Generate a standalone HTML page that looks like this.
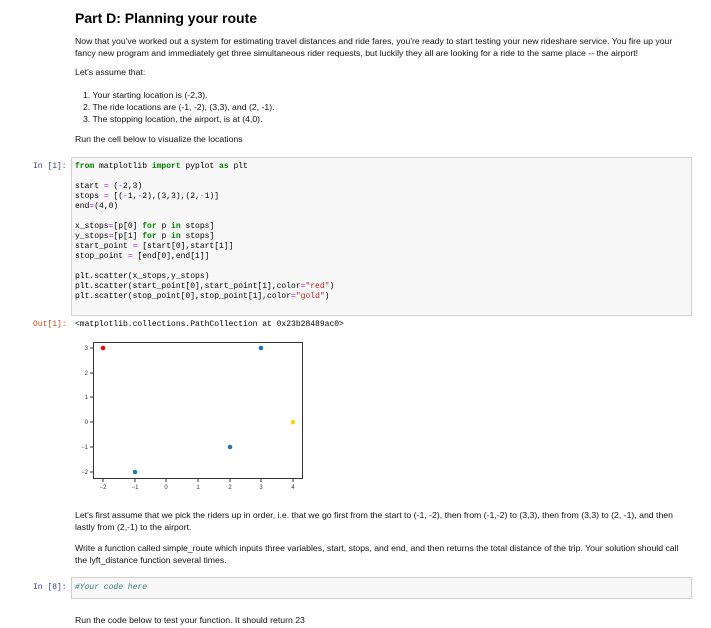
<!DOCTYPE html>
<html><head><meta charset="utf-8"><style>
body{margin:0;width:711px;height:628px;background:#fff;position:relative;overflow:hidden;font-family:"Liberation Sans",sans-serif;color:#000}
.a{position:absolute;white-space:nowrap}
.t{font-size:8.7px;line-height:10px;color:#111}
.m{font-family:"Liberation Mono",monospace;font-size:8px;line-height:10px}
.p{color:#303f9f}.o{color:#d84315}
.k{color:#008000;font-weight:bold}.op{color:#aa22ff}.s{color:#ba2121}.n{color:#080}
</style></head><body>
<div class="a" style="left:75px;top:10px;font-size:14px;font-weight:bold">Part D: Planning your route</div>
<div class="a t" style="left:75px;top:35px;line-height:12px">Now that you've worked out a system for estimating travel distances and ride fares, you're ready to start testing your new rideshare service. You fire up your<br>fancy new program and immediately get three simultaneous rider requests, but luckily they all are looking for a ride to the same place -- the airport!</div>
<div class="a t" style="left:75px;top:67px">Let's assume that:</div>
<div class="a t" style="left:83px;top:89px;line-height:12px">1. Your starting location is (-2,3).<br>2. The ride locations are (-1, -2), (3,3), and (2, -1).<br>3. The stopping location, the airport, is at (4,0).</div>
<div class="a t" style="left:75px;top:134px">Run the cell below to visualize the locations</div>
<div class="a m p" style="left:33px;top:162px">In [1]:</div>
<div class="a" style="left:71px;top:157px;width:619px;height:157px;background:#f7f7f7;border:1px solid #cfcfcf"></div>
<div class="a m" style="left:75px;top:162px"><span class="k">from</span> matplotlib <span class="k">import</span> pyplot <span class="k">as</span> plt<br><br>start <span class="op">=</span> (<span class="op">-</span>2,3)<br>stops <span class="op">=</span> [(<span class="op">-</span>1,<span class="op">-</span>2),(3,3),(2,<span class="op">-</span>1)]<br>end<span class="op">=</span>(4,0)<br><br>x_stops<span class="op">=</span>[p[0] <span class="k">for</span> p <span class="k">in</span> stops]<br>y_stops<span class="op">=</span>[p[1] <span class="k">for</span> p <span class="k">in</span> stops]<br>start_point <span class="op">=</span> [start[0],start[1]]<br>stop_point <span class="op">=</span> [end[0],end[1]]<br><br>plt.scatter(x_stops,y_stops)<br>plt.scatter(start_point[0],start_point[1],color<span class="op">=</span><span class="s">"red"</span>)<br>plt.scatter(stop_point[0],stop_point[1],color<span class="op">=</span><span class="s">"gold"</span>)</div>
<div class="a m o" style="left:33px;top:320px">Out[1]:</div>
<div class="a m" style="left:75px;top:320px">&lt;matplotlib.collections.PathCollection at 0x23b28489ac0&gt;</div>
<svg class="a" style="left:0;top:0" width="711" height="628" font-family="Liberation Sans,sans-serif" font-size="6" fill="#333">
<rect x="93.5" y="342.5" width="209" height="136" fill="none" stroke="#333" stroke-width="1"/>
<g stroke="#333">
<line x1="103" y1="479" x2="103" y2="482"/><line x1="135" y1="479" x2="135" y2="482"/><line x1="166" y1="479" x2="166" y2="482"/><line x1="198" y1="479" x2="198" y2="482"/><line x1="230" y1="479" x2="230" y2="482"/><line x1="261" y1="479" x2="261" y2="482"/><line x1="293" y1="479" x2="293" y2="482"/>
<line x1="90" y1="348" x2="93" y2="348"/><line x1="90" y1="373" x2="93" y2="373"/><line x1="90" y1="397" x2="93" y2="397"/><line x1="90" y1="422" x2="93" y2="422"/><line x1="90" y1="447" x2="93" y2="447"/><line x1="90" y1="472" x2="93" y2="472"/>
</g>
<g text-anchor="middle"><text x="103" y="489">−2</text><text x="135" y="489">−1</text><text x="166" y="489">0</text><text x="198" y="489">1</text><text x="230" y="489">2</text><text x="261" y="489">3</text><text x="293" y="489">4</text></g>
<g text-anchor="end"><text x="88" y="350">3</text><text x="88" y="375">2</text><text x="88" y="399">1</text><text x="88" y="424">0</text><text x="88" y="449">−1</text><text x="88" y="474">−2</text></g>
<circle cx="103" cy="348" r="2.3" fill="red"/><circle cx="135" cy="472" r="2.3" fill="#1f77b4"/><circle cx="261" cy="348" r="2.3" fill="#1f77b4"/><circle cx="230" cy="447" r="2.3" fill="#1f77b4"/><circle cx="293" cy="422" r="2.3" fill="gold"/>
</svg>
<div class="a t" style="left:75px;top:509px;line-height:12px">Let's first assume that we pick the riders up in order, i.e. that we go first from the start to (-1, -2), then from (-1,-2) to (3,3), then from (3,3) to (2, -1), and then<br>lastly from (2,-1) to the airport.</div>
<div class="a t" style="left:75px;top:542px;line-height:12px">Write a function called simple_route which inputs three variables, start, stops, and end, and then returns the total distance of the trip. Your solution should call<br>the lyft_distance function several times.</div>
<div class="a m p" style="left:33px;top:583px">In [8]:</div>
<div class="a" style="left:71px;top:577px;width:619px;height:20px;background:#f7f7f7;border:1px solid #cfcfcf"></div>
<div class="a m" style="left:75px;top:583px;color:#408080;font-style:italic">#Your code here</div>
<div class="a t" style="left:75px;top:615px">Run the code below to test your function. It should return 23</div>
</body></html>
